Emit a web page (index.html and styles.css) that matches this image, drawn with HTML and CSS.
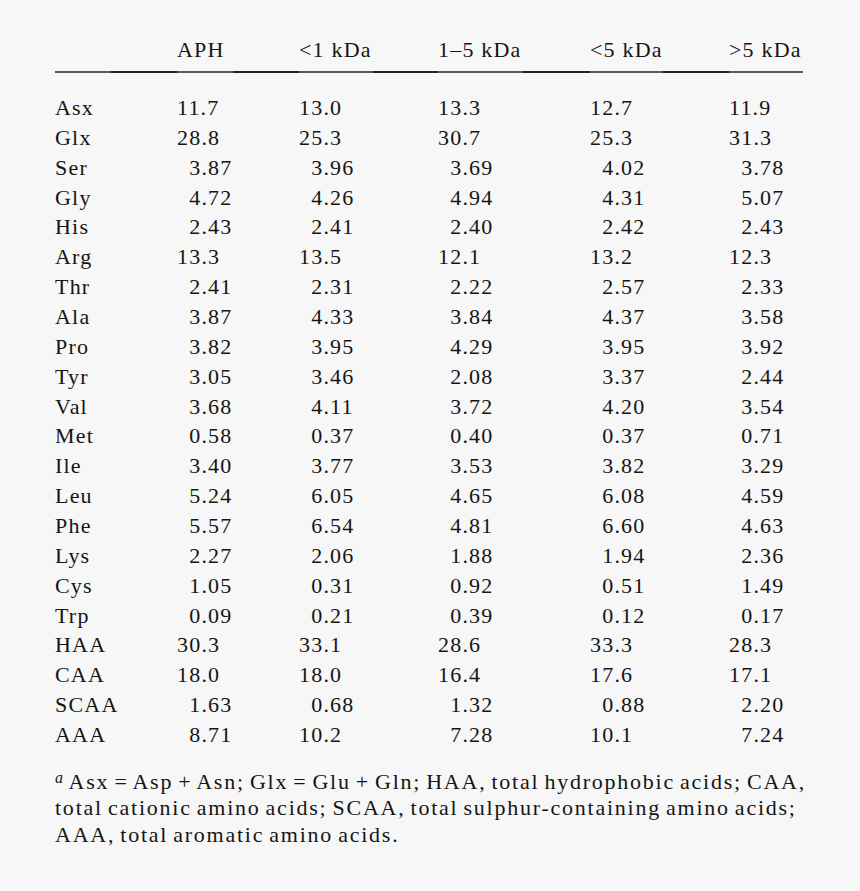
FILE: index.html
```html
<!DOCTYPE html>
<html lang="en">
<head>
<meta charset="utf-8">
<title>Amino acid composition</title>
<link rel="stylesheet" href="styles.css">
</head>
<body>
<div class="page">
<table class="aa">
<colgroup><col class="c0"><col class="c1"><col class="c2"><col class="c3"><col class="c4"><col class="c5"></colgroup>
<thead>
<tr><th></th><th>APH</th><th>&lt;1 kDa</th><th>1–5 kDa</th><th>&lt;5 kDa</th><th>&gt;5 kDa</th></tr>
</thead>
<tbody>
<tr><td>Asx</td><td>11.7</td><td>13.0</td><td>13.3</td><td>12.7</td><td>11.9</td></tr>
<tr><td>Glx</td><td>28.8</td><td>25.3</td><td>30.7</td><td>25.3</td><td>31.3</td></tr>
<tr><td>Ser</td><td class="p">3.87</td><td class="p">3.96</td><td class="p">3.69</td><td class="p">4.02</td><td class="p">3.78</td></tr>
<tr><td>Gly</td><td class="p">4.72</td><td class="p">4.26</td><td class="p">4.94</td><td class="p">4.31</td><td class="p">5.07</td></tr>
<tr><td>His</td><td class="p">2.43</td><td class="p">2.41</td><td class="p">2.40</td><td class="p">2.42</td><td class="p">2.43</td></tr>
<tr><td>Arg</td><td>13.3</td><td>13.5</td><td>12.1</td><td>13.2</td><td>12.3</td></tr>
<tr><td>Thr</td><td class="p">2.41</td><td class="p">2.31</td><td class="p">2.22</td><td class="p">2.57</td><td class="p">2.33</td></tr>
<tr><td>Ala</td><td class="p">3.87</td><td class="p">4.33</td><td class="p">3.84</td><td class="p">4.37</td><td class="p">3.58</td></tr>
<tr><td>Pro</td><td class="p">3.82</td><td class="p">3.95</td><td class="p">4.29</td><td class="p">3.95</td><td class="p">3.92</td></tr>
<tr><td>Tyr</td><td class="p">3.05</td><td class="p">3.46</td><td class="p">2.08</td><td class="p">3.37</td><td class="p">2.44</td></tr>
<tr><td>Val</td><td class="p">3.68</td><td class="p">4.11</td><td class="p">3.72</td><td class="p">4.20</td><td class="p">3.54</td></tr>
<tr><td>Met</td><td class="p">0.58</td><td class="p">0.37</td><td class="p">0.40</td><td class="p">0.37</td><td class="p">0.71</td></tr>
<tr><td>Ile</td><td class="p">3.40</td><td class="p">3.77</td><td class="p">3.53</td><td class="p">3.82</td><td class="p">3.29</td></tr>
<tr><td>Leu</td><td class="p">5.24</td><td class="p">6.05</td><td class="p">4.65</td><td class="p">6.08</td><td class="p">4.59</td></tr>
<tr><td>Phe</td><td class="p">5.57</td><td class="p">6.54</td><td class="p">4.81</td><td class="p">6.60</td><td class="p">4.63</td></tr>
<tr><td>Lys</td><td class="p">2.27</td><td class="p">2.06</td><td class="p">1.88</td><td class="p">1.94</td><td class="p">2.36</td></tr>
<tr><td>Cys</td><td class="p">1.05</td><td class="p">0.31</td><td class="p">0.92</td><td class="p">0.51</td><td class="p">1.49</td></tr>
<tr><td>Trp</td><td class="p">0.09</td><td class="p">0.21</td><td class="p">0.39</td><td class="p">0.12</td><td class="p">0.17</td></tr>
<tr><td>HAA</td><td>30.3</td><td>33.1</td><td>28.6</td><td>33.3</td><td>28.3</td></tr>
<tr><td>CAA</td><td>18.0</td><td>18.0</td><td>16.4</td><td>17.6</td><td>17.1</td></tr>
<tr><td>SCAA</td><td class="p">1.63</td><td class="p">0.68</td><td class="p">1.32</td><td class="p">0.88</td><td class="p">2.20</td></tr>
<tr><td>AAA</td><td class="p">8.71</td><td>10.2</td><td class="p">7.28</td><td>10.1</td><td class="p">7.24</td></tr>
</tbody>
</table>
<p class="note"><sup class="mark">a</sup> Asx = Asp + Asn; Glx = Glu + Gln; HAA, total hydrophobic acids; CAA,<br>total cationic amino acids; SCAA, total sulphur-containing amino acids;<br>AAA, total aromatic amino acids.</p>
</div>
</body>
</html>
```

FILE: styles.css
```css
html, body {
  margin: 0;
  padding: 0;
  background: #f7f7f7;
}
.page {
  padding: 37px 0 0 55px;
  font-family: "Liberation Serif", serif;
  font-size: 22px;
  letter-spacing: 1.2px;
  color: #151515;
}
.aa {
  border-collapse: collapse;
  table-layout: fixed;
  width: 748px;
}
.c0 { width: 122px; }
.c1 { width: 122px; }
.c2 { width: 139px; }
.c3 { width: 152px; }
.c4 { width: 139px; }
.c5 { width: 74px; }
.aa th, .aa td {
  padding: 0;
  text-align: left;
  font-weight: normal;
  white-space: nowrap;
}
.aa th {
  line-height: 26px;
  padding-bottom: 10px;
  --lt: 56px;
  background-image:
    linear-gradient(#5a5a5a, #5a5a5a),
    linear-gradient(#222, #222);
  background-repeat: no-repeat;
  background-position: left bottom, left bottom;
  background-size: var(--lt) 2px, 100% 2px;
}
.aa th:nth-child(3) { --lt: 74px; }
.aa th:nth-child(4) { --lt: 85px; }
.aa th:nth-child(5) { --lt: 73px; }
.aa th:nth-child(6) { --lt: 74px; }
.aa td {
  height: 29.86px;
  line-height: 29.86px;
}
.aa tbody tr:first-child td {
  padding-top: 20px;
}
.aa td.p {
  padding-left: 12.2px;
}
.note {
  margin: 19px 0 0 0;
  line-height: 26.5px;
  letter-spacing: 1.76px;
  word-spacing: -2.2px;
}
.mark {
  font-style: italic;
  font-size: 16px;
  vertical-align: 6px;
  line-height: 0;
}
```
